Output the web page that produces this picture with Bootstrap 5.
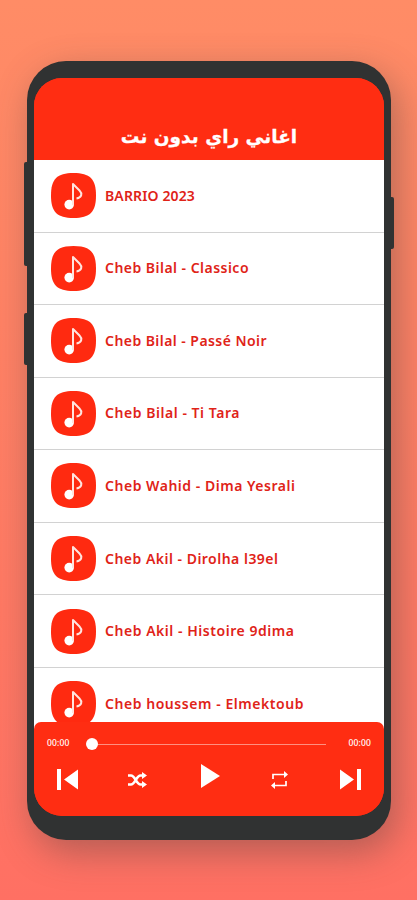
<!DOCTYPE html>
<html lang="en">
<head>
<meta charset="utf-8">
<meta name="viewport" content="width=device-width, initial-scale=1">
<title>اغاني راي بدون نت</title>
<link href="https://cdn.jsdelivr.net/npm/bootstrap@5.3.0/dist/css/bootstrap.min.css" rel="stylesheet">
<style>
body{width:417px;height:900px;background:linear-gradient(180deg,#ff8c66,#ff7063);font-family:"Noto Sans","Open Sans",sans-serif;padding:61px 26px 0 27px}
.phone{height:779px;padding:17px 7px 24px;background:#303232;border-radius:39px;box-shadow:6px 12px 36px rgba(75,65,65,.42)}
.side-key{width:4px;background:#303232}
.key-a{left:-3px;top:101px;height:104px;border-radius:2px 0 0 2px}
.key-b{left:-3px;top:252px;height:52px;border-radius:2px 0 0 2px}
.key-c{right:-3px;top:136px;height:52px;border-radius:0 2px 2px 0}
.display{border-radius:28px;background:#ff2d12}
.title-bar{height:82px;background:#ff2d12;padding-bottom:8px}
.title-bar h1{font-family:"DejaVu Sans",sans-serif;font-size:18.5px;line-height:30px;-webkit-text-stroke:.3px #fff}
.tracks{height:570px}
.track{height:72.55px;flex:none;padding-left:17px;gap:9px;border-bottom:1.5px solid #d2d2d2;color:#e02318;font-size:14px;font-weight:600;line-height:20px}
.track svg{width:45px;height:45px;flex:none}
.track span{white-space:nowrap}
.player{height:94px;margin-top:-8px;background:#ff2d12;border-radius:7px 7px 0 0}
.seek{height:43px;padding:0 13px}
.seek small{font-size:8.5px;letter-spacing:.15px;font-weight:500}
.rail{height:1px;width:234px;background:#ff9080;margin:1px 0 0 22.500px}
.knob{width:12px;height:12px;left:-6px;top:-6px}
.controls{padding:0 23px;height:29px}
.shuffle{margin:0 2px 0 -2px}
.play{margin:0 -1px 7px 1px}
</style>
<script src="https://cdn.jsdelivr.net/npm/bootstrap@5.3.0/dist/js/bootstrap.bundle.min.js"></script>
</head>
<body class="m-0 overflow-hidden">
<svg class="d-none"><defs>
<symbol id="note" viewBox="0 0 45 45"><path d="M22.500 0C39 0 45 6 45 22.500S39 45 22.500 45 0 39 0 22.500 6 0 22.500 0Z" fill="#ff2a10"/><circle cx="18.200" cy="31.600" r="4.800" fill="#fff"/><path d="M22 32V11L28.500 17.500C31.500 20.500 31 24.500 25.500 25.500" fill="none" stroke="#ffe4df" stroke-width="2" stroke-linejoin="round"/></symbol>
</defs></svg>
<main class="phone position-relative">
<i class="side-key key-a position-absolute"></i><i class="side-key key-b position-absolute"></i><i class="side-key key-c position-absolute"></i>
<div class="display h-100 overflow-hidden d-flex flex-column">
<header class="title-bar d-flex align-items-end justify-content-center text-white flex-shrink-0"><h1 class="m-0 fw-bold" dir="rtl" lang="ar">اغاني راي بدون نت</h1></header>
<div class="tracks bg-white overflow-hidden d-flex flex-column flex-shrink-0">
<div class="track d-flex align-items-center"><svg><use href="#note"/></svg><span data-w="90">BARRIO 2023</span></div>
<div class="track d-flex align-items-center"><svg><use href="#note"/></svg><span data-w="144">Cheb Bilal - Classico</span></div>
<div class="track d-flex align-items-center"><svg><use href="#note"/></svg><span data-w="162">Cheb Bilal - Passé Noir</span></div>
<div class="track d-flex align-items-center"><svg><use href="#note"/></svg><span data-w="135">Cheb Bilal - Ti Tara</span></div>
<div class="track d-flex align-items-center"><svg><use href="#note"/></svg><span data-w="190.5">Cheb Wahid - Dima Yesrali</span></div>
<div class="track d-flex align-items-center"><svg><use href="#note"/></svg><span data-w="173.5">Cheb Akil - Dirolha l39el</span></div>
<div class="track d-flex align-items-center"><svg><use href="#note"/></svg><span data-w="189.5">Cheb Akil - Histoire 9dima</span></div>
<div class="track d-flex align-items-center"><svg><use href="#note"/></svg><span data-w="199">Cheb houssem - Elmektoub</span></div>
</div>
<footer class="player text-white flex-shrink-0 position-relative">
<div class="seek d-flex align-items-center justify-content-between"><small>00:00</small><div class="rail position-relative me-auto"><b class="knob position-absolute rounded-circle bg-white"></b></div><small>00:00</small></div>
<div class="controls d-flex align-items-center justify-content-between">
<svg width="21" height="21" viewBox="0 0 21 21" fill="#fff"><path d="M0 0h4v21H0zM21 .5v20L7 10.500z"/></svg>
<svg class="shuffle" width="19" height="16" viewBox="0 0 19 16" fill="none" stroke="#fff" stroke-width="2.500"><path d="M0 3.500h3c4 0 5.500 9 9.500 9H15M0 12.500h3c4 0 5.500-9 9.500-9H15"/><path d="M14 0l5 3.500L14 7zM14 9l5 3.500-5 3.500z" fill="#fff" stroke="none"/></svg>
<svg width="19" height="24" viewBox="0 0 19 24" fill="#fff" class="play"><path d="M0 0l19 12L0 24z"/></svg>
<svg width="17" height="18" viewBox="0 0 17 18" fill="none" stroke="#fff" stroke-width="1.700"><path d="M2 8V3.500h12M15 10v4.500H3"/><path d="M13 0l4 3.500L13 7zM4 11l-4 3.500L4 18z" fill="#fff" stroke="none"/></svg>
<svg width="22" height="21" viewBox="0 0 22 21" fill="#fff"><path d="M18 0h4v21h-4zM1 .5v20L15 10.500z"/></svg>
</div>
</footer>
</div>
</main>
<script>
document.querySelectorAll('[data-w]').forEach(function(el){
  el.style.letterSpacing=((el.dataset.w-el.getBoundingClientRect().width)/el.textContent.length)+'px';
});
</script>
</body>
</html>
